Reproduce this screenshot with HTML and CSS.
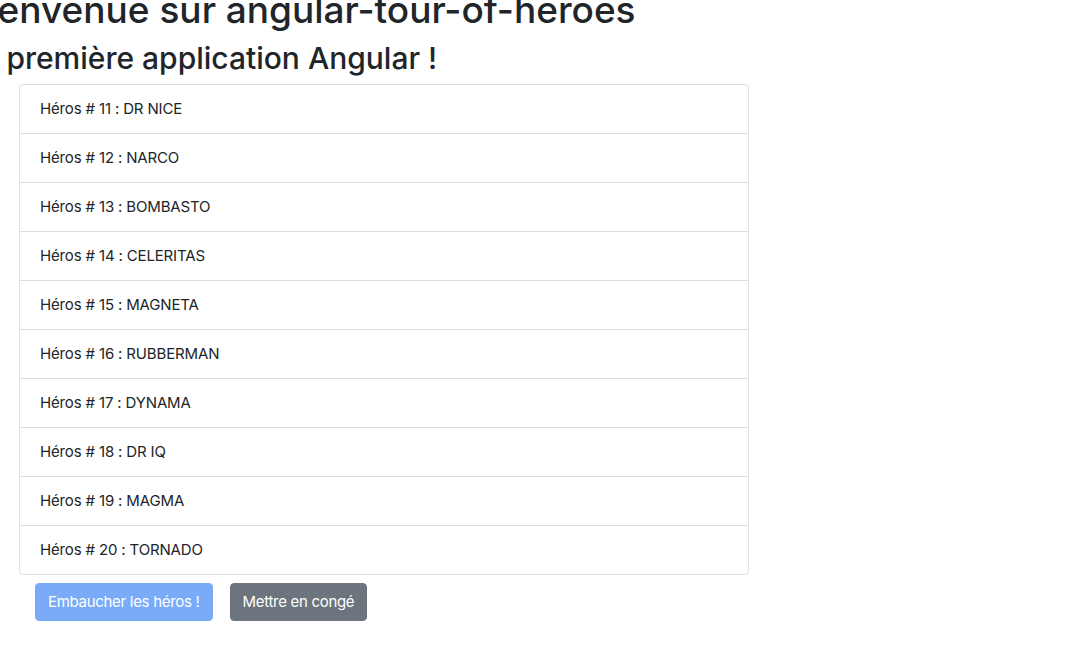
FILE: index.html
```html
<!DOCTYPE html>
<html lang="fr">
<head>
<meta charset="utf-8">
<title>angular-tour-of-heroes</title>
<link rel="stylesheet" href="styles.css">
</head>
<body>
<div class="page">
  <header class="titles">
    <h1 class="title">Bienvenue sur angular-tour-of-heroes</h1>
    <h2 class="subtitle">Ma première application Angular !</h2>
  </header>
  <ul class="list-group">
    <li class="list-item">Héros # 11 : DR NICE</li>
    <li class="list-item">Héros # 12 : NARCO</li>
    <li class="list-item">Héros # 13 : BOMBASTO</li>
    <li class="list-item">Héros # 14 : CELERITAS</li>
    <li class="list-item">Héros # 15 : MAGNETA</li>
    <li class="list-item">Héros # 16 : RUBBERMAN</li>
    <li class="list-item">Héros # 17 : DYNAMA</li>
    <li class="list-item">Héros # 18 : DR IQ</li>
    <li class="list-item">Héros # 19 : MAGMA</li>
    <li class="list-item">Héros # 20 : TORNADO</li>
  </ul>
  <div class="actions">
    <button class="btn btn-primary" disabled>Embaucher les héros !</button>
    <button class="btn btn-secondary">Mettre en congé</button>
  </div>
</div>
</body>
</html>
```
FILE: styles.css
```css
html, body {
  margin: 0;
  padding: 0;
  background: #fff;
}
body {
  font-family: Inter, "Liberation Sans", sans-serif;
  font-size: 16px;
  line-height: 1.5;
  color: #212529;
  overflow: hidden;
}
.page {
  margin-top: -12px;
}
.titles {
  white-space: nowrap;
}
.title {
  font-size: 37px;
  font-weight: 500;
  line-height: 1.2;
  margin: 0 0 8px -36px;
}
.subtitle {
  font-size: 30px;
  font-weight: 500;
  line-height: 1.2;
  margin: 0 0 8px -46px;
}
.list-group {
  list-style: none;
  margin: 0 0 0 19px;
  padding: 0;
  width: 730px;
  box-sizing: border-box;
  border: 1px solid rgba(0,0,0,.125);
  border-radius: 4px;
}
.list-item {
  padding: 12px 20px;
  border-top: 1px solid rgba(0,0,0,.125);
  font-size: 15px;
  line-height: 24px;
  letter-spacing: -0.15px;
}
.list-item:first-child {
  border-top: 0;
}
.actions {
  display: flex;
  gap: 17px;
  margin: 8px 0 0 35px;
}
.btn {
  font-family: inherit;
  font-size: 15px;
  line-height: 24px;
  letter-spacing: -0.3px;
  padding: 6px 12px;
  border: 1px solid transparent;
  border-radius: 4px;
  color: #fff;
}
.btn-primary {
  background: #7aabf9;
  border-color: #7aabf9;
}
.btn-secondary {
  background: #6c757d;
  border-color: #6c757d;
}
```
